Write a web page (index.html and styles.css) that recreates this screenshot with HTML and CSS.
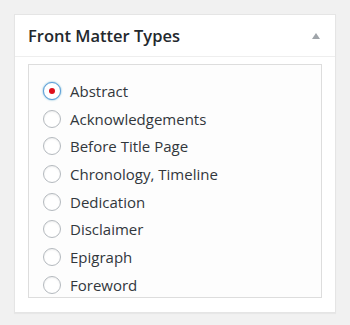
FILE: index.html
```html
<!DOCTYPE html>
<html lang="en">
<head>
    <meta charset="UTF-8">
    <title>Front Matter Types</title>
    <link rel="stylesheet" href="styles.css">
</head>
<body>
    <div class="postbox">
        <div class="hndle">
            <h2>Front Matter Types</h2>
            <span class="toggle"></span>
        </div>
        <div class="inside">
            <ul class="types">
                <li><label><input type="radio" name="fm" checked> Abstract</label></li>
                <li><label><input type="radio" name="fm"> Acknowledgements</label></li>
                <li><label><input type="radio" name="fm"> Before Title Page</label></li>
                <li><label><input type="radio" name="fm"> Chronology, Timeline</label></li>
                <li><label><input type="radio" name="fm"> Dedication</label></li>
                <li><label><input type="radio" name="fm"> Disclaimer</label></li>
                <li><label><input type="radio" name="fm"> Epigraph</label></li>
                <li><label><input type="radio" name="fm"> Foreword</label></li>
            </ul>
        </div>
    </div>
</body>
</html>
```

FILE: styles.css
```css
body {
    margin: 0;
    padding: 14px;
    background: #f1f1f1;
    font-family: "Open Sans", sans-serif;
    color: #32373c;
}

.postbox {
    background: #fff;
    border: 1px solid #e5e5e5;
    box-shadow: 0 1px 1px rgba(0, 0, 0, 0.04);
    padding-bottom: 14px;
}

.hndle {
    display: flex;
    align-items: center;
    justify-content: space-between;
    height: 41px;
    padding: 0 15px 0 13px;
    border-bottom: 1px solid #eee;
}

.hndle h2 {
    margin: 0;
    font-size: 16.5px;
    font-weight: 600;
    color: #23282d;
}

.toggle {
    width: 0;
    height: 0;
    border-left: 4px solid transparent;
    border-right: 4px solid transparent;
    border-bottom: 6px solid #a0a5aa;
}

.inside {
    margin: 7px 13px 0 13px;
    height: 232px;
    overflow: hidden;
    border: 1px solid #ddd;
    background: #fdfdfd;
}

.types {
    list-style: none;
    margin: 0;
    padding: 12px 0 0 14px;
}

.types li {
    height: 27.7px;
    display: flex;
    align-items: center;
}

.types label {
    display: flex;
    align-items: center;
    font-size: 15px;
    color: #32373c;
}

.types input {
    appearance: none;
    -webkit-appearance: none;
    box-sizing: border-box;
    width: 18px;
    height: 18px;
    margin: 0 9px 0 0;
    border: 1px solid #b4b9be;
    border-radius: 50%;
    background: #fff;
    box-shadow: inset 0 1px 2px rgba(0, 0, 0, 0.07);
    display: flex;
    align-items: center;
    justify-content: center;
}

.types input:checked {
    border-color: #5b9dd9;
    box-shadow: 0 0 2px rgba(30, 140, 190, 0.8);
}

.types input:checked::before {
    content: "";
    width: 6px;
    height: 6px;
    border-radius: 50%;
    background: #dd0e1b;
}
```
